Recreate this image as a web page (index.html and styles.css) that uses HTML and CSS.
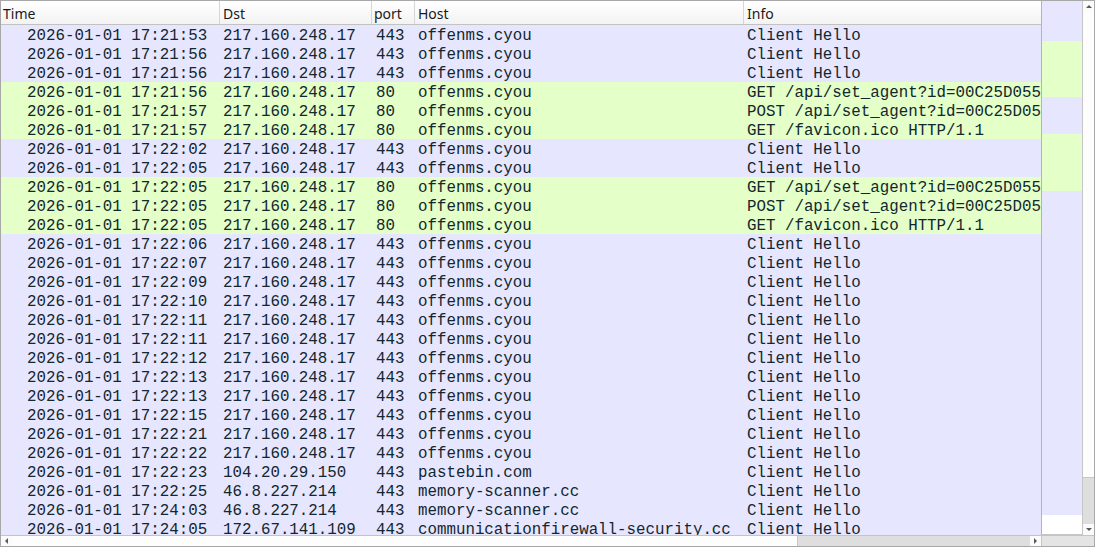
FILE: index.html
```html
<!DOCTYPE html>
<html>
<head>
<meta charset="utf-8">
<link rel="stylesheet" href="styles.css">
</head>
<body>
<div class="frame">
  <div class="table">
    <div class="head">
      <div class="hc c-time">Time</div>
      <div class="hc c-dst">Dst</div>
      <div class="hc c-port">port</div>
      <div class="hc c-host">Host</div>
      <div class="hc c-info">Info</div>
    </div>
    <div class="row tcp"><span class="c-time">2026-01-01 17:21:53</span><span class="c-dst">217.160.248.17</span><span class="c-port">443</span><span class="c-host">offenms.cyou</span><span class="c-info">Client Hello</span></div>
    <div class="row tcp"><span class="c-time">2026-01-01 17:21:56</span><span class="c-dst">217.160.248.17</span><span class="c-port">443</span><span class="c-host">offenms.cyou</span><span class="c-info">Client Hello</span></div>
    <div class="row tcp"><span class="c-time">2026-01-01 17:21:56</span><span class="c-dst">217.160.248.17</span><span class="c-port">443</span><span class="c-host">offenms.cyou</span><span class="c-info">Client Hello</span></div>
    <div class="row http"><span class="c-time">2026-01-01 17:21:56</span><span class="c-dst">217.160.248.17</span><span class="c-port">80</span><span class="c-host">offenms.cyou</span><span class="c-info">GET /api/set_agent?id=00C25D0550A1&amp;v=2 HTTP/1.1</span></div>
    <div class="row http"><span class="c-time">2026-01-01 17:21:57</span><span class="c-dst">217.160.248.17</span><span class="c-port">80</span><span class="c-host">offenms.cyou</span><span class="c-info">POST /api/set_agent?id=00C25D0550A1&amp;v=2 HTTP/1.1</span></div>
    <div class="row http"><span class="c-time">2026-01-01 17:21:57</span><span class="c-dst">217.160.248.17</span><span class="c-port">80</span><span class="c-host">offenms.cyou</span><span class="c-info">GET /favicon.ico HTTP/1.1</span></div>
    <div class="row tcp"><span class="c-time">2026-01-01 17:22:02</span><span class="c-dst">217.160.248.17</span><span class="c-port">443</span><span class="c-host">offenms.cyou</span><span class="c-info">Client Hello</span></div>
    <div class="row tcp"><span class="c-time">2026-01-01 17:22:05</span><span class="c-dst">217.160.248.17</span><span class="c-port">443</span><span class="c-host">offenms.cyou</span><span class="c-info">Client Hello</span></div>
    <div class="row http"><span class="c-time">2026-01-01 17:22:05</span><span class="c-dst">217.160.248.17</span><span class="c-port">80</span><span class="c-host">offenms.cyou</span><span class="c-info">GET /api/set_agent?id=00C25D0550A1&amp;v=2 HTTP/1.1</span></div>
    <div class="row http"><span class="c-time">2026-01-01 17:22:05</span><span class="c-dst">217.160.248.17</span><span class="c-port">80</span><span class="c-host">offenms.cyou</span><span class="c-info">POST /api/set_agent?id=00C25D0550A1&amp;v=2 HTTP/1.1</span></div>
    <div class="row http"><span class="c-time">2026-01-01 17:22:05</span><span class="c-dst">217.160.248.17</span><span class="c-port">80</span><span class="c-host">offenms.cyou</span><span class="c-info">GET /favicon.ico HTTP/1.1</span></div>
    <div class="row tcp"><span class="c-time">2026-01-01 17:22:06</span><span class="c-dst">217.160.248.17</span><span class="c-port">443</span><span class="c-host">offenms.cyou</span><span class="c-info">Client Hello</span></div>
    <div class="row tcp"><span class="c-time">2026-01-01 17:22:07</span><span class="c-dst">217.160.248.17</span><span class="c-port">443</span><span class="c-host">offenms.cyou</span><span class="c-info">Client Hello</span></div>
    <div class="row tcp"><span class="c-time">2026-01-01 17:22:09</span><span class="c-dst">217.160.248.17</span><span class="c-port">443</span><span class="c-host">offenms.cyou</span><span class="c-info">Client Hello</span></div>
    <div class="row tcp"><span class="c-time">2026-01-01 17:22:10</span><span class="c-dst">217.160.248.17</span><span class="c-port">443</span><span class="c-host">offenms.cyou</span><span class="c-info">Client Hello</span></div>
    <div class="row tcp"><span class="c-time">2026-01-01 17:22:11</span><span class="c-dst">217.160.248.17</span><span class="c-port">443</span><span class="c-host">offenms.cyou</span><span class="c-info">Client Hello</span></div>
    <div class="row tcp"><span class="c-time">2026-01-01 17:22:11</span><span class="c-dst">217.160.248.17</span><span class="c-port">443</span><span class="c-host">offenms.cyou</span><span class="c-info">Client Hello</span></div>
    <div class="row tcp"><span class="c-time">2026-01-01 17:22:12</span><span class="c-dst">217.160.248.17</span><span class="c-port">443</span><span class="c-host">offenms.cyou</span><span class="c-info">Client Hello</span></div>
    <div class="row tcp"><span class="c-time">2026-01-01 17:22:13</span><span class="c-dst">217.160.248.17</span><span class="c-port">443</span><span class="c-host">offenms.cyou</span><span class="c-info">Client Hello</span></div>
    <div class="row tcp"><span class="c-time">2026-01-01 17:22:13</span><span class="c-dst">217.160.248.17</span><span class="c-port">443</span><span class="c-host">offenms.cyou</span><span class="c-info">Client Hello</span></div>
    <div class="row tcp"><span class="c-time">2026-01-01 17:22:15</span><span class="c-dst">217.160.248.17</span><span class="c-port">443</span><span class="c-host">offenms.cyou</span><span class="c-info">Client Hello</span></div>
    <div class="row tcp"><span class="c-time">2026-01-01 17:22:21</span><span class="c-dst">217.160.248.17</span><span class="c-port">443</span><span class="c-host">offenms.cyou</span><span class="c-info">Client Hello</span></div>
    <div class="row tcp"><span class="c-time">2026-01-01 17:22:22</span><span class="c-dst">217.160.248.17</span><span class="c-port">443</span><span class="c-host">offenms.cyou</span><span class="c-info">Client Hello</span></div>
    <div class="row tcp"><span class="c-time">2026-01-01 17:22:23</span><span class="c-dst">104.20.29.150</span><span class="c-port">443</span><span class="c-host">pastebin.com</span><span class="c-info">Client Hello</span></div>
    <div class="row tcp"><span class="c-time">2026-01-01 17:22:25</span><span class="c-dst">46.8.227.214</span><span class="c-port">443</span><span class="c-host">memory-scanner.cc</span><span class="c-info">Client Hello</span></div>
    <div class="row tcp"><span class="c-time">2026-01-01 17:24:03</span><span class="c-dst">46.8.227.214</span><span class="c-port">443</span><span class="c-host">memory-scanner.cc</span><span class="c-info">Client Hello</span></div>
    <div class="row tcp"><span class="c-time">2026-01-01 17:24:05</span><span class="c-dst">172.67.141.109</span><span class="c-port">443</span><span class="c-host">communicationfirewall-security.cc</span><span class="c-info">Client Hello</span></div>
  </div>

  <div class="minimap">
    <div class="seg tcp" style="height:40px"></div>
    <div class="seg http" style="height:56px"></div>
    <div class="seg tcp" style="height:37px"></div>
    <div class="seg http" style="height:57px"></div>
    <div class="seg tcp" style="height:324px"></div>
    <div class="seg blank"></div>
  </div>

  <div class="vscroll">
    <div class="arrow-box"><span class="tri tri-up"></span></div>
    <div class="vthumb"></div>
    <div class="vtrack"></div>
    <div class="arrow-box"><span class="tri tri-down"></span></div>
  </div>

  <div class="hscroll">
    <div class="harrow"><span class="tri tri-left"></span></div>
    <div class="hthumb"></div>
    <div class="htrack"></div>
    <div class="harrow"><span class="tri tri-right"></span></div>
  </div>

  <div class="corner"></div>
</div>
</body>
</html>
```

FILE: styles.css
```css
html, body {
  margin: 0;
  padding: 0;
  background: #ffffff;
}

.frame {
  width: 1095px;
  height: 547px;
  box-sizing: border-box;
  border: 1px solid #a8a8a8;
  display: grid;
  grid-template-columns: 1040px 42px 11px;
  grid-template-rows: 534px 11px;
  background: #ffffff;
  overflow: hidden;
}

.table {
  grid-column: 1;
  grid-row: 1;
  overflow: hidden;
  background: #ffffff;
}

.head {
  display: grid;
  grid-template-columns: 219px 152px 43px 329px 297px;
  height: 23px;
  border-bottom: 1px solid #c2c2c2;
  background: linear-gradient(#ffffff, #f3f3f3);
  font-family: "Noto Sans", "Open Sans", sans-serif;
  font-size: 14px;
  color: #1a1a1a;
}

.hc {
  box-sizing: border-box;
  border-right: 1px solid #d6d6d6;
  padding-left: 3px;
  padding-top: 2px;
  line-height: 21px;
  white-space: nowrap;
  overflow: hidden;
}

.hc.c-time { padding-left: 2px; }
.hc.c-port { padding-left: 2px; }
.hc.c-info { border-right: none; }

.row {
  display: grid;
  grid-template-columns: 219px 152px 43px 329px 297px;
  height: 19px;
  font-family: "Liberation Mono", monospace;
  font-size: 15.8px;
  line-height: 19px;
  color: #12272e;
}

.row > span {
  padding-left: 3px;
  padding-top: 2px;
  white-space: nowrap;
  overflow: hidden;
}

.row > .c-time { padding-left: 26px; }
.row > .c-port { padding-left: 4px; }

.tcp { background: #e7e6ff; }
.http { background: #e4ffc7; }

.minimap {
  grid-column: 2;
  grid-row: 1;
  display: flex;
  flex-direction: column;
  border-left: 1px solid #b4b4b4;
  border-right: 1px solid #c6c6c6;
}

.seg { flex: none; }
.seg.blank { flex: 1; background: #ffffff; border-bottom: 1px solid #c6c6c6; }

.vscroll {
  grid-column: 3;
  grid-row: 1;
  display: flex;
  flex-direction: column;
  background: #fbfbfb;
}

.arrow-box {
  height: 11px;
  display: flex;
  align-items: center;
  justify-content: center;
  flex: none;
}

.vthumb {
  height: 465px;
  flex: none;
  background: #fdfdfd;
  border-bottom: 1px solid #c8c8c8;
}

.vtrack {
  flex: 1;
  background: #dedede;
}

.hscroll {
  grid-column: 1;
  grid-row: 2;
  display: flex;
  background: #fbfbfb;
  border-top: 1px solid #c4c4c4;
}

.harrow {
  width: 11px;
  flex: none;
  display: flex;
  align-items: center;
  justify-content: center;
}

.hthumb {
  width: 785px;
  flex: none;
  background: #fdfdfd;
  border-right: 1px solid #c8c8c8;
}

.htrack {
  flex: 1;
  background: #dedede;
}

.corner {
  grid-column: 2 / 4;
  grid-row: 2;
  background: #e4e4e4;
  border-top: 1px solid #c4c4c4;
  border-left: 1px solid #c4c4c4;
}

.tri {
  width: 0;
  height: 0;
  display: block;
}

.tri-up {
  border-left: 3px solid transparent;
  border-right: 3px solid transparent;
  border-bottom: 3px solid #5a5a5a;
}

.tri-down {
  border-left: 3px solid transparent;
  border-right: 3px solid transparent;
  border-top: 3px solid #5a5a5a;
}

.tri-left {
  border-top: 3px solid transparent;
  border-bottom: 3px solid transparent;
  border-right: 3px solid #5a5a5a;
}

.tri-right {
  border-top: 3px solid transparent;
  border-bottom: 3px solid transparent;
  border-left: 3px solid #5a5a5a;
}
```
